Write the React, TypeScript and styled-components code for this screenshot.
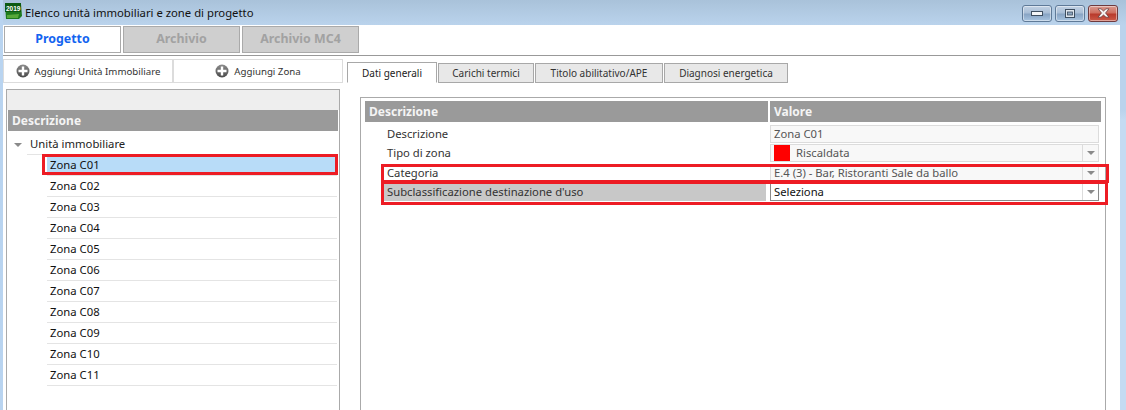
import React from "react";
import styled, { createGlobalStyle } from "styled-components";

const Global = createGlobalStyle`
  html, body { margin: 0; padding: 0; height: 410px; overflow: hidden; background: #fff; }
  #root { width: 1126px; height: 410px; overflow: hidden; }
  * { box-sizing: border-box; }
`;

const Window = styled.div`
  width: 1126px;
  height: 410px;
  display: flex;
  flex-direction: column;
  background: linear-gradient(90deg, #b9d4f0 0, #b9d4f0 3px, transparent 3px),
    linear-gradient(180deg, #a9c2da 0, #bad3ec 25px, #bad3ec 110px, #c4dbf2 120px, #c4dbf2 100%);
  font-family: "Noto Sans", "Open Sans", sans-serif;
  font-size: 11.25px;
  color: #333;
`;

const TitleBar = styled.div`
  height: 25px;
  flex: none;
  display: flex;
  align-items: center;
  padding: 0 5px 1px 5px;
`;

const Logo = styled.svg`
  width: 17px;
  height: 17px;
  flex: none;
  margin-right: 3px;
  margin-top: -1px;
`;

const LogoYear = styled.text`
  font-family: "Liberation Sans", sans-serif;
  font-size: 6.5px;
  font-weight: 700;
  fill: #fff;
`;

const TitleText = styled.span`
  font-size: 11.3px;
  color: #111;
  flex: 1;
`;

const WindowButtons = styled.div`
  display: flex;
  gap: 3px;
  margin-right: 3px;
  margin-top: 2px;
`;

const WinButton = styled.div<{ $close?: boolean }>`
  width: 30px;
  height: 17px;
  border-radius: 3px;
  border: 1px solid ${(p) => (p.$close ? "#6e3a3e" : "#5f7a98")};
  box-shadow: inset 0 0 0 1px rgba(255, 255, 255, 0.45);
  background: ${(p) =>
    p.$close
      ? "linear-gradient(180deg, #d99a90 0, #cf6f60 45%, #b93a2c 55%, #cc5a48 100%)"
      : "linear-gradient(180deg, #c2d2e4 0, #a9bed6 45%, #88a4c4 55%, #a8c4e0 100%)"};
  display: flex;
  align-items: center;
  justify-content: center;
`;

const Content = styled.div`
  flex: 1;
  min-height: 0;
  margin: 0 6px 0 3px;
  background: #fff;
  display: flex;
  flex-direction: column;
`;

const MainTabs = styled.div`
  flex: none;
  height: 31px;
  padding: 1px 0 0 1px;
  display: flex;
  gap: 2px;
  align-items: flex-start;
  border-bottom: 1px solid #999;
`;

const MainTab = styled.div<{ $active?: boolean }>`
  width: 117px;
  height: 27px;
  display: flex;
  align-items: center;
  justify-content: center;
  font-size: 12.4px;
  font-weight: 700;
  padding-bottom: 2px;
  border: 1px solid #aaa;
  background: ${(p) => (p.$active ? "#fff" : "#cfcfcf")};
  color: ${(p) => (p.$active ? "#1464f0" : "#a2a2a2")};
`;

const Body = styled.div`
  flex: 1;
  min-height: 0;
  display: flex;
`;

const LeftColumn = styled.div`
  width: 340px;
  flex: none;
  padding-top: 3px;
  display: flex;
  flex-direction: column;
`;

const Actions = styled.div`
  display: flex;
  height: 24px;
  width: 340px;
  flex: none;
`;

const ActionButton = styled.div<{ $w: number }>`
  width: ${(p) => p.$w}px;
  border: 1px solid #dcdcdc;
  display: flex;
  align-items: center;
  justify-content: center;
  gap: 5px;
  font-size: 9.7px;
  color: #333;
  background: #fff;
`;

const PlusIcon = styled.svg`
  width: 14px;
  height: 14px;
  flex: none;
`;

const TreePanel = styled.div`
  margin: 6px 0 0 3px;
  width: 334px;
  flex: 1;
  border: 1px solid #aaa;
  border-bottom: 0;
  padding: 0 1px;
  display: flex;
  flex-direction: column;
`;

const TreeTop = styled.div`
  height: 20px;
  flex: none;
  margin: 0 -1px;
  background: #eee;
`;

const HeaderBand = styled.div`
  height: 21px;
  flex: none;
  background: #9a9a9a;
  color: #f4f4f4;
  font-weight: 700;
  font-size: 12px;
  display: flex;
  align-items: center;
  padding-left: 4px;
  padding-bottom: 1px;
`;

const TreeRoot = styled.div`
  height: 24px;
  flex: none;
  position: relative;
  margin-left: 19px;
  margin-right: 1px;
  padding-left: 3px;
  display: flex;
  align-items: center;
  border-bottom: 1px solid #e4e4e4;
  font-size: 11.3px;
  color: #222;
  padding-top: 2px;
`;

const Caret = styled.span`
  position: absolute;
  left: -13px;
  top: 12px;
  width: 0;
  height: 0;
  border-left: 4px solid transparent;
  border-right: 4px solid transparent;
  border-top: 4px solid #8a8a8a;
`;

const TreeRow = styled.div<{ $selected?: boolean }>`
  height: 21px;
  flex: none;
  position: relative;
  margin-left: 39px;
  margin-right: 1px;
  padding-left: 3px;
  padding-bottom: 1px;
  display: flex;
  align-items: center;
  border-bottom: 1px solid #e4e4e4;
  font-size: 11.3px;
  color: #111;
  background: ${(p) => (p.$selected ? "#b8dcf8" : "transparent")};
`;

const TreeHighlight = styled.span`
  position: absolute;
  left: -5px;
  right: -1px;
  top: -1px;
  bottom: 0;
  border: 3px solid #ed1c24;
`;

const RightColumn = styled.div`
  flex: 1;
  min-width: 0;
  padding: 5px 0 0 4px;
  display: flex;
  flex-direction: column;
`;

const SubTabs = styled.div`
  height: 22px;
  flex: none;
  display: flex;
  gap: 1px;
  align-items: flex-end;
`;

const SubTab = styled.div<{ $w: number; $active?: boolean }>`
  width: ${(p) => p.$w}px;
  height: ${(p) => (p.$active ? 21 : 20)}px;
  border: 1px solid #a8a8a8;
  border-bottom-color: ${(p) => (p.$active ? "#fff" : "#a8a8a8")};
  background: ${(p) => (p.$active ? "#fff" : "#e8e8e8")};
  color: ${(p) => (p.$active ? "#222" : "#333")};
  display: flex;
  align-items: center;
  justify-content: center;
  font-size: 10px;
`;

const DetailPanel = styled.div`
  margin: 14px 0 0 13px;
  width: 746px;
  flex: 1;
  border: 1px solid #aaa;
  border-bottom: 0;
  padding: 3px 4px 0 4px;
`;

const DetailHeader = styled.div`
  display: grid;
  grid-template-columns: 403px 331px;
  gap: 2px;
`;

const PropRows = styled.div`
  margin: 3px 0 0 19px;
`;

const PropRow = styled.div<{ $after?: number }>`
  position: relative;
  height: 18px;
  display: grid;
  grid-template-columns: 382px 329px;
  column-gap: 4px;
  margin-bottom: ${(p) => p.$after ?? 1}px;
`;

const PropLabel = styled.div<{ $muted?: boolean }>`
  display: flex;
  align-items: center;
  padding: 0 0 2px 3px;
  font-size: 11.25px;
  color: #333;
  background: ${(p) => (p.$muted ? "#c8c8c8" : "transparent")};
`;

const PropValue = styled.div<{ $strong?: boolean }>`
  display: flex;
  align-items: center;
  border: 1px solid ${(p) => (p.$strong ? "#8a8a8a" : "#dcdcdc")};
  background: ${(p) => (p.$strong ? "#fff" : "#f8f8f8")};
  color: ${(p) => (p.$strong ? "#111" : "#555")};
  padding-left: 3px;
  font-size: 11.25px;
`;

const ValueText = styled.span`
  flex: 1;
  margin-top: -2px;
`;

const Swatch = styled.span`
  width: 16px;
  height: 16px;
  background: #ff0000;
  margin: 0 6px 0 0;
  flex: none;
`;

const DropButton = styled.span`
  width: 16px;
  align-self: stretch;
  flex: none;
  border-left: 1px solid #dcdcdc;
  display: flex;
  align-items: center;
  justify-content: center;
  &::before {
    content: "";
    width: 0;
    height: 0;
    border-left: 4px solid transparent;
    border-right: 4px solid transparent;
    border-top: 4px solid #8a8a8a;
  }
`;

const RedBox = styled.span<{ $top: number; $bottom: number; $right: number }>`
  position: absolute;
  left: -3px;
  top: ${(p) => p.$top}px;
  bottom: ${(p) => p.$bottom}px;
  right: ${(p) => p.$right}px;
  border: 3px solid #ed1c24;
  pointer-events: none;
`;

const Plus = () => (
  <PlusIcon viewBox="0 0 14 14">
    <defs>
      <linearGradient id="pl" x1="0" y1="0" x2="0" y2="1">
        <stop offset="0" stopColor="#8c8c8c" />
        <stop offset="1" stopColor="#4a4a4a" />
      </linearGradient>
    </defs>
    <circle cx="7" cy="7" r="6.5" fill="url(#pl)" />
    <path d="M5.8 2.5h2.4v3.3h3.3v2.4H8.2v3.3H5.8V8.2H2.5V5.8h3.3z" fill="#fff" />
  </PlusIcon>
);

const zones = ["C01", "C02", "C03", "C04", "C05", "C06", "C07", "C08", "C09", "C10", "C11"];

export default function App() {
  return (
    <Window>
      <Global />
      <TitleBar>
        <Logo viewBox="0 0 17 17">
          <path d="M0 1h16l1 12-3 3H1z" fill="#1e7a1e" />
          <path d="M2 12l12-1-1 4H2z" fill="#57a83a" />
          <rect x="0" y="0" width="16" height="9" fill="#0d5a12" />
          <LogoYear x="1" y="7.5">2019</LogoYear>
        </Logo>
        <TitleText>Elenco unità immobiliari e zone di progetto</TitleText>
        <WindowButtons>
          <WinButton>
            <svg width="12" height="6" viewBox="0 0 12 6">
              <rect x="0.5" y="1.5" width="11" height="4" fill="#f4f6f8" stroke="#3e4e60" />
            </svg>
          </WinButton>
          <WinButton>
            <svg width="10" height="9" viewBox="0 0 10 9">
              <rect x="0.5" y="0.5" width="9" height="8" fill="#dfe6ee" stroke="#3e4e60" />
              <rect x="2.5" y="3" width="5" height="3" fill="#8ea6c0" stroke="#3e4e60" strokeWidth="0.8" />
            </svg>
          </WinButton>
          <WinButton $close>
            <svg width="13" height="10" viewBox="0 0 13 10">
              <path d="M1 0.8h3l2.5 2.2L9 0.8h3L8.5 5 12 9.2H9L6.5 7 4 9.2H1L4.5 5z" fill="#f6f2f0" stroke="#5a3236" strokeWidth="0.7" />
            </svg>
          </WinButton>
        </WindowButtons>
      </TitleBar>
      <Content>
        <MainTabs>
          <MainTab $active>Progetto</MainTab>
          <MainTab>Archivio</MainTab>
          <MainTab>Archivio MC4</MainTab>
        </MainTabs>
        <Body>
          <LeftColumn>
            <Actions>
              <ActionButton $w={170}><Plus />Aggiungi Unità Immobiliare</ActionButton>
              <ActionButton $w={170}><Plus />Aggiungi Zona</ActionButton>
            </Actions>
            <TreePanel>
              <TreeTop />
              <HeaderBand>Descrizione</HeaderBand>
              <TreeRoot><Caret />Unità immobiliare</TreeRoot>
              {zones.map((z, i) => (
                <TreeRow key={z} $selected={i === 0}>
                  {i === 0 && <TreeHighlight />}
                  Zona {z}
                </TreeRow>
              ))}
            </TreePanel>
          </LeftColumn>
          <RightColumn>
            <SubTabs>
              <SubTab $w={90} $active>Dati generali</SubTab>
              <SubTab $w={96}>Carichi termici</SubTab>
              <SubTab $w={128}>Titolo abilitativo/APE</SubTab>
              <SubTab $w={124}>Diagnosi energetica</SubTab>
            </SubTabs>
            <DetailPanel>
              <DetailHeader>
                <HeaderBand>Descrizione</HeaderBand>
                <HeaderBand>Valore</HeaderBand>
              </DetailHeader>
              <PropRows>
                <PropRow>
                  <PropLabel>Descrizione</PropLabel>
                  <PropValue><ValueText>Zona C01</ValueText></PropValue>
                </PropRow>
                <PropRow $after={2}>
                  <PropLabel>Tipo di zona</PropLabel>
                  <PropValue>
                    <Swatch />
                    <ValueText>Riscaldata</ValueText>
                    <DropButton />
                  </PropValue>
                </PropRow>
                <PropRow>
                  <PropLabel>Categoria</PropLabel>
                  <PropValue>
                    <ValueText>E.4 (3) - Bar, Ristoranti Sale da ballo</ValueText>
                    <DropButton />
                  </PropValue>
                  <RedBox $top={0} $bottom={-1} $right={-8} />
                </PropRow>
                <PropRow>
                  <PropLabel $muted>Subclassificazione destinazione d'uso</PropLabel>
                  <PropValue $strong>
                    <ValueText>Seleziona</ValueText>
                    <DropButton />
                  </PropValue>
                  <RedBox $top={-2} $bottom={-4} $right={-7} />
                </PropRow>
              </PropRows>
            </DetailPanel>
          </RightColumn>
        </Body>
      </Content>
    </Window>
  );
}
